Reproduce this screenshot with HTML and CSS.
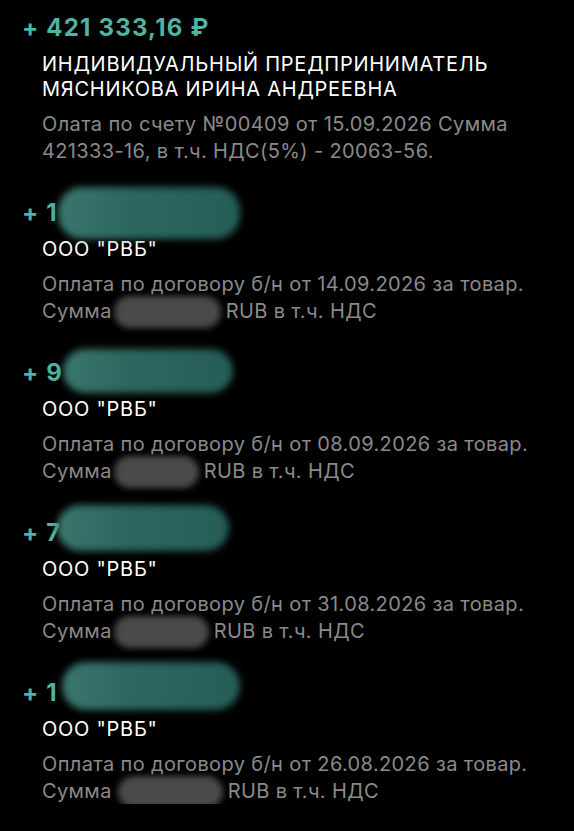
FILE: index.html
```html
<!DOCTYPE html>
<html lang="ru">
<head>
<meta charset="utf-8">
<title>Операции</title>
<link rel="stylesheet" href="styles.css">
</head>
<body>
<main class="feed">
  <article class="op">
    <div class="op-amount">+ 421 333,16 ₽</div>
    <div class="op-name">ИНДИВИДУАЛЬНЫЙ ПРЕДПРИНИМАТЕЛЬ<br>МЯСНИКОВА ИРИНА АНДРЕЕВНА</div>
    <p class="op-desc">Олата по счету №00409 от 15.09.2026 Сумма<br>421333-16, в т.ч. НДС(5%) - 20063-56.</p>
  </article>
  <article class="op">
    <div class="op-amount">+ 1<span class="blob blob-a"></span></div>
    <div class="op-name">ООО "РВБ"</div>
    <p class="op-desc">Оплата по договору б/н от 14.09.2026 за товар.<br>Сумма<span class="mask mask-a"></span>RUB в т.ч. НДС</p>
  </article>
  <article class="op">
    <div class="op-amount">+ 9<span class="blob blob-b"></span></div>
    <div class="op-name">ООО "РВБ"</div>
    <p class="op-desc">Оплата по договору б/н от 08.09.2026 за товар.<br>Сумма<span class="mask mask-b"></span>RUB в т.ч. НДС</p>
  </article>
  <article class="op">
    <div class="op-amount">+ 7<span class="blob blob-c"></span></div>
    <div class="op-name">ООО "РВБ"</div>
    <p class="op-desc">Оплата по договору б/н от 31.08.2026 за товар.<br>Сумма<span class="mask mask-c"></span>RUB в т.ч. НДС</p>
  </article>
  <article class="op">
    <div class="op-amount">+ 1<span class="blob blob-d"></span></div>
    <div class="op-name">ООО "РВБ"</div>
    <p class="op-desc">Оплата по договору б/н от 26.08.2026 за товар.<br>Сумма <span class="mask mask-d"></span>RUB в т.ч. НДС</p>
  </article>
</main>
</body>
</html>
```
FILE: styles.css
```css
html, body {
  margin: 0;
  padding: 0;
  background: #000;
}

body {
  font-family: Inter, "Noto Sans", sans-serif;
  color: #fff;
  overflow: hidden;
}

.feed {
  display: flex;
  flex-direction: column;
  gap: 35px;
  padding: 14px 0 0 22px;
}

.op {
  display: flex;
  flex-direction: column;
}

.op-amount {
  position: relative;
  font-size: 24px;
  line-height: 28px;
  font-weight: 700;
  color: #4fb4a2;
  letter-spacing: 1.2px;
}

.op-name {
  margin: 10px 0 0 20px;
  font-size: 20px;
  line-height: 25px;
  color: #fff;
  letter-spacing: 0.75px;
}

.op-desc {
  margin: 9px 0 0 20px;
  font-size: 20px;
  line-height: 26.5px;
  color: #8a8a8a;
  letter-spacing: 0.37px;
}

.blob {
  position: absolute;
  top: -12px;
  left: 36px;
  width: 182px;
  height: 52px;
  border-radius: 24px;
  background: linear-gradient(90deg, #3a766d 0%, #2c675f 40%, #255d57 100%);
  filter: blur(3.5px);
}

.blob-b { left: 41px; width: 170px; top: -10px; height: 44px; }
.blob-c { left: 35px; width: 172px; top: -14px; height: 46px; }
.blob-d { left: 40px; width: 178px; top: -17px; height: 48px; }

.mask {
  display: inline-block;
  vertical-align: middle;
  height: 32px;
  margin: -5px 5px -5px 2px;
  border-radius: 16px;
  background: #4a4a4a;
  filter: blur(3px);
}

.mask-a { width: 107px; }
.mask-b { width: 85px; }
.mask-c { width: 95px; }
.mask-d { width: 105px; margin-left: 0; }
```
